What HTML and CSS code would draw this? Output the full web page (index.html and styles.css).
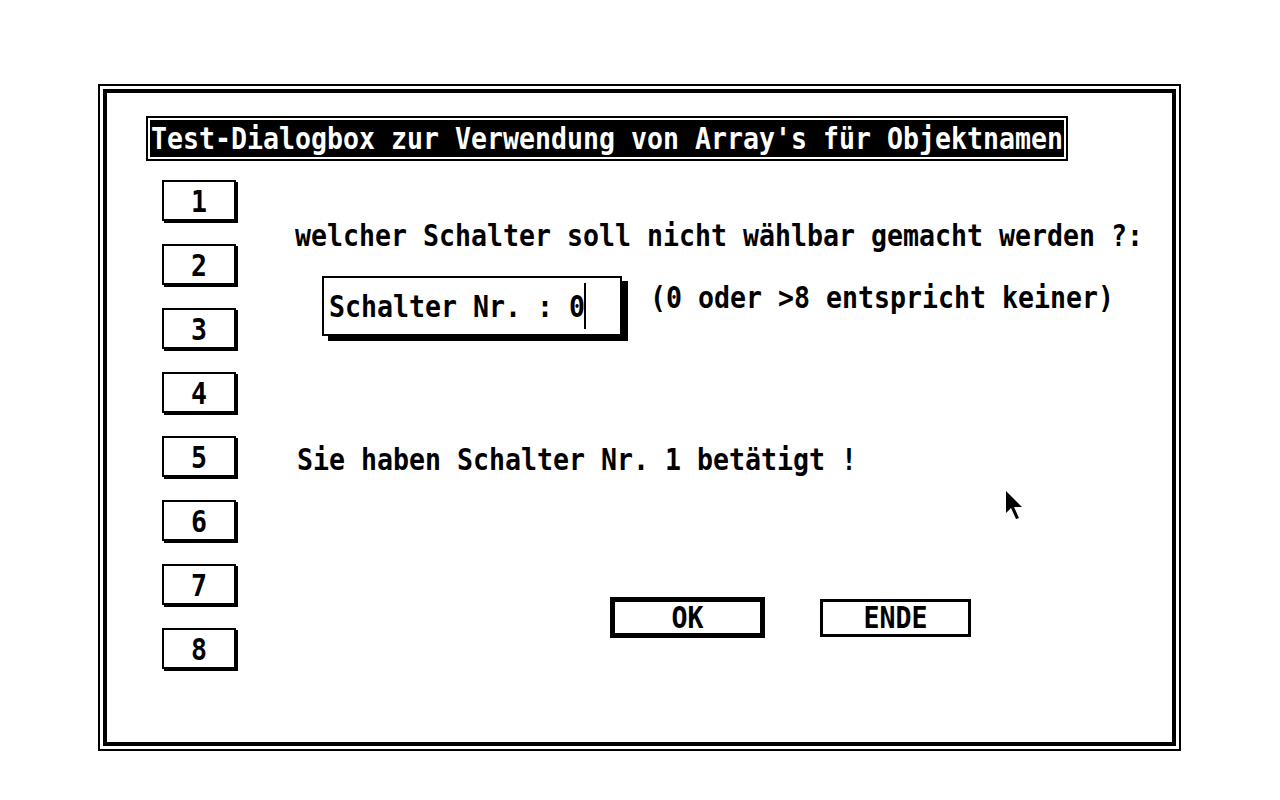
FILE: index.html
```html
<!DOCTYPE html>
<html lang="de">
<head>
    <meta charset="UTF-8">
    <meta name="viewport" content="width=device-width, initial-scale=1.0">
    <title>Test-Dialogbox</title>
    <link rel="stylesheet" href="styles.css">
</head>
<body>
  <div class="desk">
    <div class="dialog">
      <div class="dialog-inner">
        <div class="title">
          <span class="title-bar"><span class="txt">Test-Dialogbox zur Verwendung von Array's für Objektnamen</span></span>
        </div>

        <div class="main">
          <div class="switches">
            <button class="switch"><span class="txt">1</span></button>
            <button class="switch"><span class="txt">2</span></button>
            <button class="switch"><span class="txt">3</span></button>
            <button class="switch"><span class="txt">4</span></button>
            <button class="switch"><span class="txt">5</span></button>
            <button class="switch"><span class="txt">6</span></button>
            <button class="switch"><span class="txt">7</span></button>
            <button class="switch"><span class="txt">8</span></button>
          </div>

          <div class="panel">
            <p class="question"><span class="txt">welcher Schalter soll nicht wählbar gemacht werden ?:</span></p>

            <div class="entry-row">
              <label class="entry" for="nr">
                <span class="txt">Schalter Nr. : 0</span><span class="caret"></span>
              </label>
              <input type="hidden" id="nr" name="nr" value="0">
              <span class="hint"><span class="txt">(0 oder &gt;8 entspricht keiner)</span></span>
            </div>

            <p class="status"><span class="txt">Sie haben Schalter Nr. 1 betätigt !</span></p>

            <div class="actions">
              <button class="btn btn-default"><span class="txt">OK</span></button>
              <button class="btn btn-exit"><span class="txt">ENDE</span></button>
            </div>
          </div>
        </div>
      </div>
    </div>

    <!-- mouse pointer -->
    <svg class="pointer" width="18" height="30" viewBox="0 0 18 30">
      <polygon points="0,0 0,22 5,17 10,28 13,27 8,16 16,16" fill="#000"/>
    </svg>
  </div>
</body>
</html>
```

FILE: styles.css
```css
body {
    margin: 0;
    background: #fff;
    font-family: "DejaVu Sans Mono", "Liberation Mono", monospace;
    font-weight: bold;
    font-size: 26.58px;
    line-height: 32px;
    color: #000;
}
p {
    margin: 0;
}
button {
    font: inherit;
    color: inherit;
    background: #fff;
    padding: 0;
    cursor: pointer;
}

/* system font is taller than it is wide */
.txt {
    display: inline-block;
    transform: scaleY(1.13);
    white-space: pre;
}

.desk {
    position: relative;
    height: 800px;
    padding: 84px 0 0 98px;
    box-sizing: border-box;
}

.dialog {
    width: 1083px;
    height: 667px;
    box-sizing: border-box;
    border: 2px solid #000;
    padding: 3px;
}
.dialog-inner {
    height: 100%;
    box-sizing: border-box;
    border: 4px solid #000;
    padding: 23px 0 0 39px;
}

.title {
    display: inline-block;
    border: 2px solid #000;
    padding: 2px;
}
.title-bar {
    display: block;
    height: 37px;
    line-height: 37px;
    padding: 0 1px;
    background: #000;
    color: #fff;
}

.main {
    display: flex;
    margin-top: 19px;
}

.switches {
    display: flex;
    flex-direction: column;
    gap: 23px;
    margin-left: 16px;
}
.switch {
    width: 74px;
    height: 41px;
    box-sizing: border-box;
    border: 2px solid #000;
    box-shadow: 2px 2px 0 #000;
    line-height: 39px;
    text-align: center;
}

.panel {
    margin-left: 59px;
    padding-top: 40px;
}

.entry-row {
    display: flex;
    align-items: flex-start;
    margin-top: 24px;
}
.entry {
    display: flex;
    align-items: flex-start;
    width: 300px;
    height: 60px;
    margin-left: 27px;
    box-sizing: border-box;
    border: 2px solid #000;
    box-shadow: 6px 5px 0 #000;
    padding: 13px 0 0 5px;
}
.caret {
    width: 2px;
    height: 46px;
    margin: -8px 0 0 -1px;
    background: #000;
}
.hint {
    margin: 6px 0 0 28px;
}

.status {
    margin: 108px 0 0 2px;
}

.actions {
    display: flex;
    align-items: center;
    margin: 121px 0 0 315px;
}
.btn {
    box-sizing: border-box;
    text-align: center;
    border: 3px solid #000;
}
.btn-default {
    width: 155px;
    height: 41px;
    border-width: 5px;
    line-height: 31px;
}
.btn-exit {
    width: 151px;
    height: 38px;
    margin-left: 55px;
    line-height: 32px;
}

.pointer {
    position: absolute;
    left: 1006px;
    top: 491px;
}
```
